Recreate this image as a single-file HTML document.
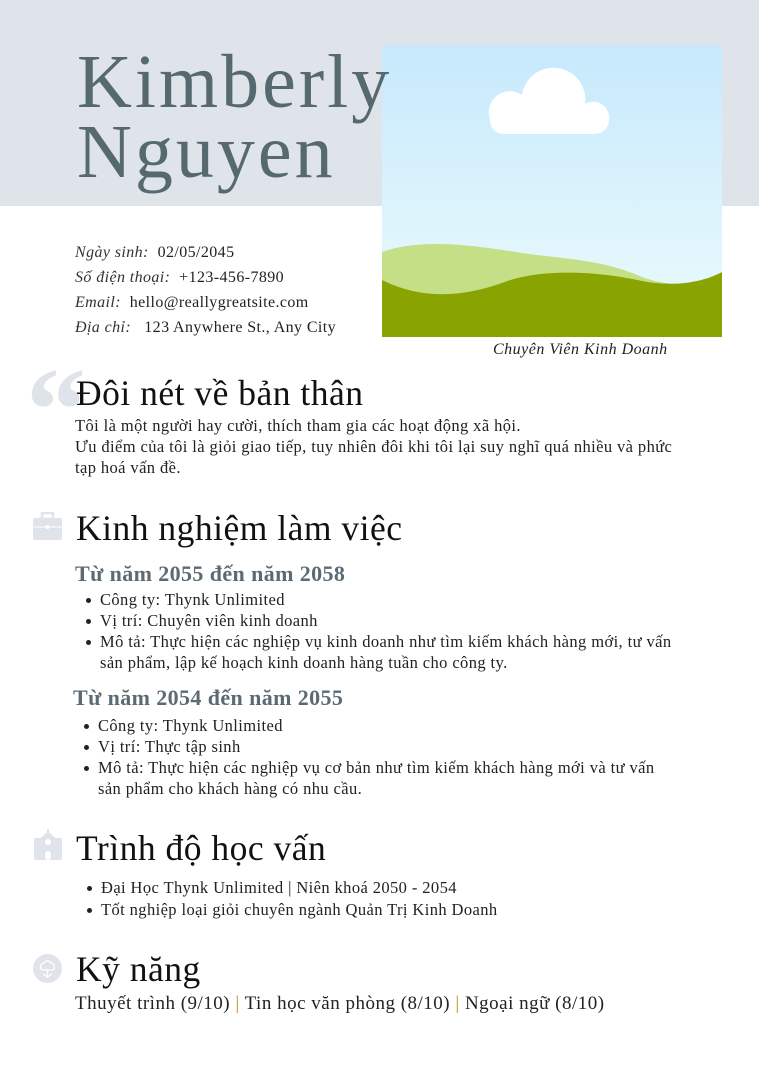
<!DOCTYPE html>
<html><head><meta charset="utf-8"><style>
*{margin:0;padding:0;box-sizing:border-box}
body{width:759px;height:1079px;background:#fff;position:relative;overflow:hidden;font-family:"Liberation Serif","Noto Serif CJK SC",serif;color:#222}
.band{position:absolute;left:0;top:0;width:759px;height:206px;background:#dfe3ea}
.name{position:absolute;left:77px;font-size:76px;color:#56696f;line-height:1;letter-spacing:3px}
.t{position:absolute;white-space:nowrap;font-size:16.5px;letter-spacing:0.4px;color:#222}
.info{font-size:16px;letter-spacing:0.4px}
.info i{color:#333}
h2{position:absolute;left:76px;font-size:35.5px;letter-spacing:0.5px;font-weight:normal;color:#111;white-space:nowrap;line-height:1}
h3{position:absolute;font-size:22px;letter-spacing:0.4px;font-weight:bold;color:#5c6b73;white-space:nowrap;line-height:1}
.li{position:absolute;white-space:nowrap;font-size:16.5px;letter-spacing:0.4px;color:#222;line-height:21px}
.li:before{content:"";position:absolute;left:-14px;top:9px;width:5px;height:5px;border-radius:50%;background:#222}
.ic{position:absolute}
</style></head><body>
<div class="band"></div>
<svg style="position:absolute;left:382px;top:45px" width="340" height="292" viewBox="0 0 340 292">
<defs><linearGradient id="s" x1="0" y1="0" x2="0" y2="1"><stop offset="0" stop-color="#c6e9fc"/><stop offset="1" stop-color="#ecfbfc"/></linearGradient></defs>
<rect width="340" height="292" fill="url(#s)"/>
<path d="M108 74a21 21 0 0 1 32-24a31 31 0 0 1 63 9a16 16 0 0 1 24 16a14 14 0 0 1-14 14h-94a14 14 0 0 1-11-15z" fill="#fff"/>
<path d="M0 207C40 193 90 200 140 208C180 214 220 214 260 232C290 243 320 240 340 232V292H0Z" fill="#c5df86"/>
<path d="M0 235C40 255 80 252 120 238C160 222 220 227 260 236C290 242 320 238 340 227V292H0Z" fill="#89a300"/>
</svg>
<div class="name" style="top:44px">Kimberly</div>
<div class="name" style="top:114px">Nguyen</div>
<div class="t" style="left:493px;top:341px;font-style:italic;font-size:16px;letter-spacing:0.5px">Chuyên Viên Kinh Doanh</div>
<div class="t info" style="left:75px;top:244px"><i>Ngày sinh:</i>&nbsp; 02/05/2045</div>
<div class="t info" style="left:75px;top:269px"><i>Số điện thoại:</i>&nbsp; +123-456-7890</div>
<div class="t info" style="left:75px;top:294px"><i>Email:</i>&nbsp; hello@reallygreatsite.com</div>
<div class="t info" style="left:75px;top:319px"><i>Địa chỉ:</i>&nbsp;&nbsp; 123 Anywhere St., Any City</div>

<div class="ic" style="left:26px;top:350px;font-size:120px;line-height:1;color:#dfe3ea;font-weight:bold;font-family:'Liberation Serif',serif">&ldquo;</div>
<h2 style="top:376px">Đôi nét về bản thân</h2>
<div class="t" style="left:75px;top:415px;line-height:21px">Tôi là một người hay cười, thích tham gia các hoạt động xã hội.<br>Ưu điểm của tôi là giỏi giao tiếp, tuy nhiên đôi khi tôi lại suy nghĩ quá nhiều và phức<br>tạp hoá vấn đề.</div>

<svg class="ic" style="left:33px;top:512px" width="29" height="28" viewBox="0 0 29 28"><rect x="9" y="1" width="11" height="6" fill="none" stroke="#dfe3ea" stroke-width="2.5"/><rect x="0" y="6" width="29" height="22" rx="2" fill="#dfe3ea"/><path d="M0 15h29" stroke="#fff" stroke-width="1"/><circle cx="14.5" cy="15" r="2" fill="#fff"/></svg>
<h2 style="top:511px">Kinh nghiệm làm việc</h2>
<h3 style="left:75px;top:563px">Từ năm 2055 đến năm 2058</h3>
<div class="li" style="left:100px;top:589px">Công ty: Thynk Unlimited</div>
<div class="li" style="left:100px;top:610px">Vị trí: Chuyên viên kinh doanh</div>
<div class="li" style="left:100px;top:631px">Mô tả: Thực hiện các nghiệp vụ kinh doanh như tìm kiếm khách hàng mới, tư vấn<br>sản phẩm, lập kế hoạch kinh doanh hàng tuần cho công ty.</div>
<h3 style="left:73px;top:687px">Từ năm 2054 đến năm 2055</h3>
<div class="li" style="left:98px;top:715px">Công ty: Thynk Unlimited</div>
<div class="li" style="left:98px;top:736px">Vị trí: Thực tập sinh</div>
<div class="li" style="left:98px;top:757px">Mô tả: Thực hiện các nghiệp vụ cơ bản như tìm kiếm khách hàng mới và tư vấn<br>sản phẩm cho khách hàng có nhu cầu.</div>

<svg class="ic" style="left:34px;top:829px" width="28" height="31" viewBox="0 0 28 31"><path d="M14 0v5M8 9l6-5 6 5z" stroke="#dfe3ea" stroke-width="2" fill="#dfe3ea"/><rect x="0" y="9" width="28" height="22" rx="2" fill="#dfe3ea"/><circle cx="14" cy="13" r="3" fill="#fff"/><rect x="11" y="22" width="6" height="9" rx="3" fill="#fff"/></svg>
<h2 style="top:831px">Trình độ học vấn</h2>
<div class="li" style="left:101px;top:877px">Đại Học Thynk Unlimited | Niên khoá 2050 - 2054</div>
<div class="li" style="left:101px;top:899px">Tốt nghiệp loại giỏi chuyên ngành Quản Trị Kinh Doanh</div>

<svg class="ic" style="left:33px;top:954px" width="29" height="29" viewBox="0 0 29 29"><circle cx="14.5" cy="14.5" r="14.5" fill="#dfe3ea"/><path d="M9 16a4 4 0 0 1 2-7a4 4 0 0 1 7 0a4 4 0 0 1 2 7zM14.5 16v8M10 20l4.5 3 4.5-3" stroke="#fff" stroke-width="1.3" fill="none"/></svg>
<h2 style="top:952px">Kỹ năng</h2>
<div class="t" style="left:75px;top:993px;font-size:19px;letter-spacing:0.5px">Thuyết trình (9/10) <span style="color:#c8901e">|</span> Tin học văn phòng (8/10) <span style="color:#c8901e">|</span> Ngoại ngữ (8/10)</div>
</body></html>
